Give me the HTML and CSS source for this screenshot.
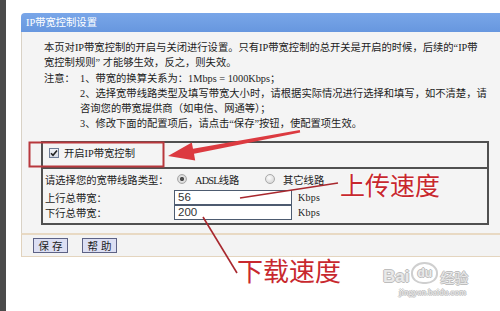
FILE: index.html
```html
<!DOCTYPE html>
<html lang="zh-CN">
<head>
    <meta charset="UTF-8">
    <meta name="viewport" content="width=device-width, initial-scale=1.0">
    <title>IP带宽控制设置</title>
    <link rel="stylesheet" href="styles.css">
</head>
<body>
    <div class="screen">
        <div class="edge"></div>
        <div class="main">
            <div class="panel">
                <div class="panel-head">IP带宽控制设置</div>
                <div class="panel-body">
                    <div class="intro">
                        <p>本页对IP带宽控制的开启与关闭进行设置。只有IP带宽控制的总开关是开启的时候，后续的“IP带<br>宽控制规则” 才能够生效，反之，则失效。</p>
                        <div class="note">
                            <span class="note-label">注意：</span>
                            <div class="note-list">
                                <p>1、带宽的换算关系为：1Mbps = 1000Kbps；</p>
                                <p>2、选择宽带线路类型及填写带宽大小时，请根据实际情况进行选择和填写，如不清楚，请<br>咨询您的带宽提供商（如电信、网通等）；</p>
                                <p>3、修改下面的配置项后，请点击“保存”按钮，使配置项生效。</p>
                            </div>
                        </div>
                    </div>

                    <div class="box">
                        <div class="box-top">
                            <span class="check">
                                <svg width="8" height="8" viewBox="0 0 8 8"><path d="M1 4.2 L3 6.2 L7 1.5" fill="none" stroke="#222" stroke-width="1.6"/></svg>
                            </span>
                            <span>开启IP带宽控制</span>
                        </div>
                        <div class="box-form">
                            <span class="label">请选择您的宽带线路类型：</span>
                            <div class="options">
                                <span class="option first"><span class="radio on"></span><span><span class="en">ADSL</span>线路</span></span>
                                <span class="option"><span class="radio"></span><span>其它线路</span></span>
                            </div>
                            <span class="label">上行总带宽：</span>
                            <div class="field"><input type="text" value="56"><span class="unit">Kbps</span></div>
                            <span class="label">下行总带宽：</span>
                            <div class="field"><input type="text" value="200"><span class="unit">Kbps</span></div>
                        </div>
                    </div>
                </div>
                <div class="panel-foot">
                    <button>保存</button>
                    <button>帮助</button>
                </div>
            </div>
        </div>
    </div>

    <!-- hand drawn notes on top of the screenshot -->
    <svg class="marks" width="500" height="311" viewBox="0 0 500 311">
        <rect x="29.5" y="142.5" width="134" height="24" fill="none" stroke="#b8383d" stroke-width="2"/>
        <polygon points="168,156 191.8,142.4 193,148.7 299.8,130 300.2,132.5 194,153.7 195.2,160.5" fill="#dc3a40"/>
        <line x1="240" y1="198" x2="338" y2="183" stroke="#a8282e" stroke-width="1.6"/>
        <line x1="203" y1="217" x2="237" y2="273" stroke="#a8282e" stroke-width="1.6"/>
    </svg>
    <div class="callout up">上传速度</div>
    <div class="callout down">下载速度</div>

    <div class="watermark">
        <div class="wm-logo"><span class="wm-bai">Bai</span><span class="wm-du">du</span><span class="wm-jy">经验</span></div>
        <div class="wm-url">jingyan.baidu.com</div>
    </div>
</body>
</html>
```

FILE: styles.css
```css
html, body {
    margin: 0;
    padding: 0;
    width: 500px;
    height: 311px;
    overflow: hidden;
    background: #fff;
}
body {
    position: relative;
    font-family: "Liberation Serif", "Noto Sans CJK SC", sans-serif;
    font-size: 10.3px;
    color: #1c1c1c;
}
p {
    margin: 0;
}
.screen {
    display: flex;
    height: 311px;
}
.edge {
    width: 6px;
    background: #4b4b4b;
}
.main {
    flex: 1;
    padding: 13px 0 0 15px;
    overflow: hidden;
}
.panel {
    width: 500px;
}
.panel-head {
    height: 19px;
    line-height: 19px;
    padding-left: 5px;
    color: #fff;
    background: linear-gradient(#79a6e8, #6797df);
    border-radius: 4px 0 0 0;
}
.panel-body {
    background: #f4f4f4;
    border-left: 1px solid #d9d2c6;
    padding: 8px 0 8px 19px;
}
.intro {
    padding-left: 3px;
    line-height: 15.3px;
    white-space: nowrap;
}
.note {
    display: flex;
}
.note-label {
    width: 36px;
    flex-shrink: 0;
}
.box {
    margin-top: 9px;
    width: 448px;
    box-sizing: border-box;
    border: 2px solid #505050;
}
.box-top {
    height: 26px;
    box-sizing: border-box;
    border-bottom: 2px solid #505050;
    padding: 0 0 4px 6px;
    display: flex;
    align-items: center;
    gap: 5px;
}
.check {
    width: 10px;
    height: 10px;
    box-sizing: border-box;
    border: 1px solid #6d7c96;
    background: linear-gradient(#f2f4f8, #d6dbe5);
    display: flex;
    align-items: center;
    justify-content: center;
}
.box-form {
    display: grid;
    grid-template-columns: 129px auto;
    grid-template-rows: 21px 15px 15px;
    align-items: center;
    padding: 0 0 3px 2px;
}
.options {
    display: flex;
    align-items: center;
}
.option {
    display: inline-flex;
    align-items: center;
    gap: 8px;
}
.option.first {
    width: 91px;
    padding-left: 3px;
    box-sizing: border-box;
}
.en {
    letter-spacing: -0.8px;
}
.radio {
    width: 10px;
    height: 10px;
    border-radius: 50%;
    box-sizing: border-box;
    border: 1px solid #a9a9a9;
    background: radial-gradient(circle at 40% 35%, #fdfdfd, #cdcdcd);
}
.radio.on {
    background: radial-gradient(circle, #4d4d4d 0 1.8px, #e6e6e6 2.4px, #c8c8c8 5px);
}
.field {
    display: flex;
    align-items: center;
    height: 15px;
}
.field input {
    width: 118px;
    height: 15px;
    box-sizing: border-box;
    margin: 0;
    padding: 0 0 0 3px;
    border: 1px solid #4d5b70;
    background: #fff;
    font-family: "Liberation Sans", sans-serif;
    font-size: 11.5px;
    color: #333;
    outline: none;
}
.unit {
    margin-left: 6px;
    font-size: 10px;
    letter-spacing: 0.3px;
}
.panel-foot {
    height: 24px;
    box-sizing: border-box;
    background: #f3f3f3;
    border-top: 2px solid #e8d9c3;
    border-bottom: 1px solid #e4d5bf;
    border-left: 1px solid #e0d2bd;
    padding: 3px 0 0 11px;
    display: flex;
    align-items: flex-start;
    gap: 14px;
}
.panel-foot button {
    width: 35px;
    height: 15px;
    margin: 0;
    padding: 0 0 0 3px;
    border: 1px solid #5d6285;
    background: #dcdff3;
    font-family: "Noto Sans CJK SC", sans-serif;
    font-size: 10.5px;
    line-height: 13px;
    letter-spacing: 3px;
    color: #1c1c1c;
}
.marks {
    position: absolute;
    left: 0;
    top: 0;
    pointer-events: none;
}
.callout {
    position: absolute;
    font-family: "Noto Sans CJK SC", sans-serif;
    line-height: 1;
    color: #c8282e;
    text-shadow: 0 0 2px #fff, 0 0 3px #fff;
    white-space: nowrap;
}
.callout.up {
    left: 340px;
    top: 172px;
    font-size: 25px;
}
.callout.down {
    left: 237px;
    top: 257px;
    font-size: 26px;
}
.watermark {
    position: absolute;
    left: 383px;
    top: 258px;
    color: #e9e9e9;
    text-shadow: -1px 0 #bdbdbd, 1px 0 #bdbdbd, 0 -1px #bdbdbd, 0 1px #bdbdbd;
}
.wm-logo {
    display: flex;
    align-items: flex-end;
    height: 27px;
}
.wm-bai {
    font-family: "Liberation Sans", sans-serif;
    font-weight: bold;
    font-size: 17px;
    line-height: 17px;
}
.wm-du {
    font-family: "Liberation Sans", sans-serif;
    font-weight: bold;
    font-size: 12px;
    line-height: 14px;
    padding: 2px 4px;
    margin: 0 2px 1px;
    border-radius: 50% 50% 45% 45%;
    border: 2px solid #cfcfcf;
}
.wm-jy {
    font-family: "Noto Sans CJK SC", sans-serif;
    font-size: 14px;
    line-height: 16px;
}
.wm-url {
    font-family: "Liberation Serif", serif;
    font-size: 9px;
    line-height: 10px;
    margin-top: 2px;
    padding-left: 16px;
}
```
